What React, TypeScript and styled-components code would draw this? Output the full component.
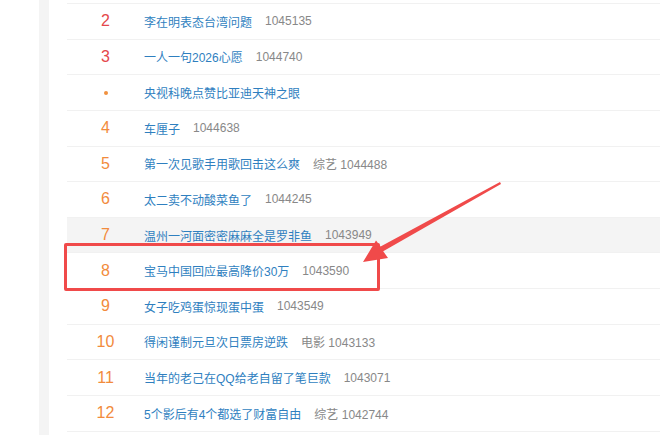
import React from "react";
import styled, { createGlobalStyle } from "styled-components";

const Global = createGlobalStyle`
  html, body { margin: 0; padding: 0; background: #ffffff; }
  body { width: 660px; height: 435px; overflow: hidden; }
  #root { width: 660px; height: 435px; }
`;

const Page = styled.div`
  position: relative;
  display: flex;
  width: 660px;
  height: 435px;
  overflow: hidden;
  background: #ffffff;
  font-family: "Liberation Sans", "Noto Sans CJK SC", sans-serif;
`;

const Gutter = styled.div`
  width: 39px;
  flex: none;
`;

const Stripe = styled.div`
  width: 10px;
  flex: none;
  background: #f4f4f4;
`;

const Spacer = styled.div`
  width: 18px;
  flex: none;
`;

const List = styled.div`
  flex: 1;
  display: flex;
  flex-direction: column;
  margin-top: -31.64px;
`;

const Row = styled.div<{ $shaded?: boolean }>`
  display: flex;
  align-items: center;
  height: 35.64px;
  flex: none;
  box-sizing: border-box;
  border-bottom: 1px solid #f1f1f1;
  background: ${(p) => (p.$shaded ? "#f4f4f4" : "transparent")};
`;

const Rank = styled.div<{ $hot?: boolean }>`
  width: 77px;
  flex: none;
  text-align: center;
  font-family: "Liberation Sans", Arial, sans-serif;
  font-size: 16px;
  line-height: 18px;
  color: ${(p) => (p.$hot ? "#e4474b" : "#f28b3c")};
`;

const Dot = styled.span`
  display: inline-block;
  width: 4px;
  height: 4px;
  border-radius: 50%;
  background: #f0913f;
  vertical-align: middle;
`;

const Title = styled.span`
  font-size: 12px;
  color: #2f7fbf;
  white-space: nowrap;
`;

const Meta = styled.span`
  margin-left: 13px;
  font-size: 12px;
  color: #888888;
  white-space: nowrap;
`;

const Frame = styled.div`
  position: absolute;
  left: 64px;
  top: 243px;
  width: 316px;
  height: 48px;
  box-sizing: border-box;
  border: 3px solid #f04a4a;
  border-radius: 2px;
`;

const Arrow = styled.svg`
  position: absolute;
  left: 0;
  top: 0;
  width: 660px;
  height: 435px;
  pointer-events: none;
`;

type Item = { rank: string; title: string; tag?: string; count?: string };

const items: Item[] = [
  { rank: "1", title: "" },
  { rank: "2", title: "李在明表态台湾问题", count: "1045135" },
  { rank: "3", title: "一人一句2026心愿", count: "1044740" },
  { rank: "•", title: "央视科晚点赞比亚迪天神之眼" },
  { rank: "4", title: "车厘子", count: "1044638" },
  { rank: "5", title: "第一次见歌手用歌回击这么爽", tag: "综艺", count: "1044488" },
  { rank: "6", title: "太二卖不动酸菜鱼了", count: "1044245" },
  { rank: "7", title: "温州一河面密密麻麻全是罗非鱼", count: "1043949" },
  { rank: "8", title: "宝马中国回应最高降价30万", count: "1043590" },
  { rank: "9", title: "女子吃鸡蛋惊现蛋中蛋", count: "1043549" },
  { rank: "10", title: "得闲谨制元旦次日票房逆跌", tag: "电影", count: "1043133" },
  { rank: "11", title: "当年的老己在QQ给老自留了笔巨款", count: "1043071" },
  { rank: "12", title: "5个影后有4个都选了财富自由", tag: "综艺", count: "1042744" },
  { rank: "13", title: "" },
];

export default function App() {
  return (
    <>
      <Global />
      <Page>
        <Gutter />
        <Stripe />
        <Spacer />
        <List>
          {items.map((it, i) => (
            <Row key={i} $shaded={it.rank === "7"}>
              <Rank $hot={it.rank === "1" || it.rank === "2" || it.rank === "3"}>
                {it.rank === "•" ? <Dot /> : it.title ? it.rank : ""}
              </Rank>
              <Title>{it.title}</Title>
              {it.count && (
                <Meta>
                  {it.tag ? `${it.tag} ` : ""}
                  {it.count}
                </Meta>
              )}
            </Row>
          ))}
        </List>
        <Frame />
        <Arrow viewBox="0 0 660 435">
          <polygon
            points="363,262 376,240.5 380.6,246.4 500,182 501,184 383.2,251.2 388,258"
            fill="#f04a4a"
          />
        </Arrow>
      </Page>
    </>
  );
}
